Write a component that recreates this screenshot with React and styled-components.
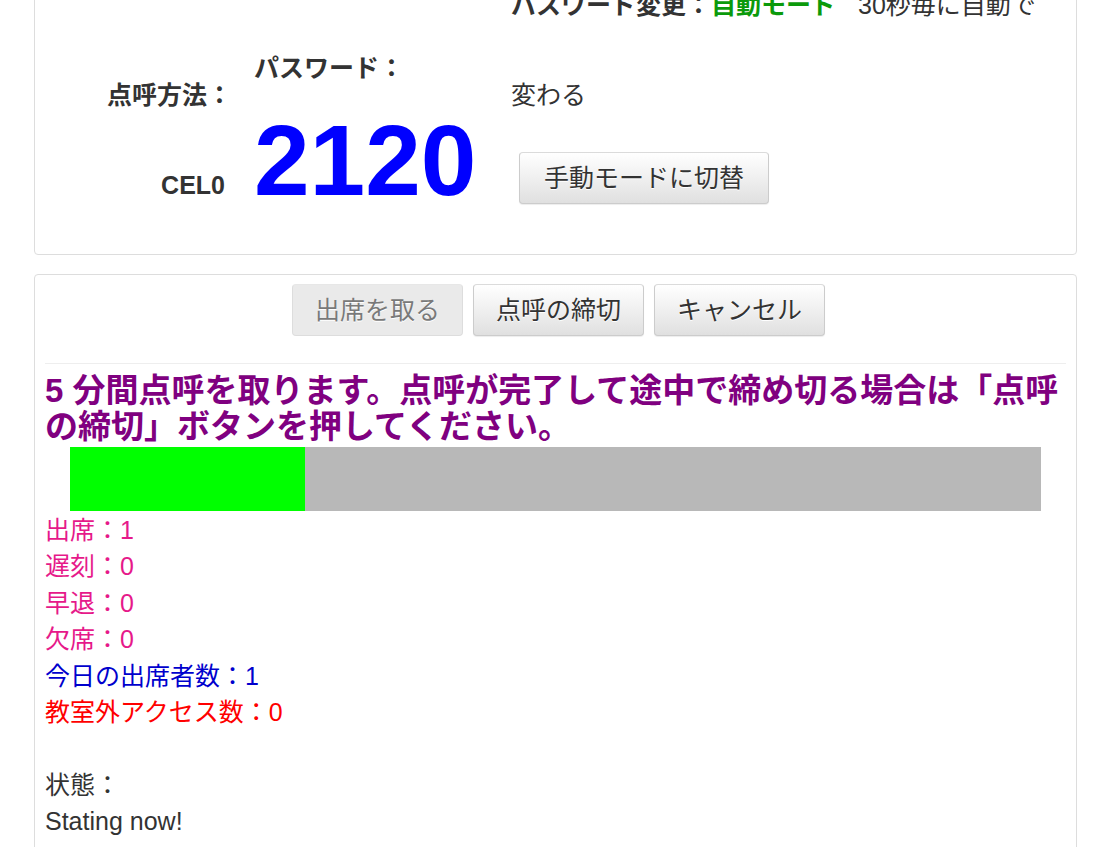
import React from 'react';
import styled, { createGlobalStyle } from 'styled-components';

const GlobalStyle = createGlobalStyle`
  body {
    margin: 0;
    background: #fff;
    color: #333;
    font-family: "Liberation Sans", "Noto Sans CJK JP", sans-serif;
    font-size: 25px;
    overflow: hidden;
  }
`;

const Page = styled.div`
  width: 1043px;
  padding-left: 34px;
`;

const Panel = styled.div`
  border: 1px solid #ddd;
  border-radius: 4px;
  background: #fff;
  margin-top: ${(p) => p.$offset || 0}px;
  margin-bottom: 19px;
`;

// top panel: method / password / password mode
const InfoRow = styled.div`
  display: flex;
  align-items: flex-start;
  padding: 19px 10px 44px;
`;

const MethodCol = styled.div`
  width: 180px;
  text-align: right;
  font-weight: bold;
  line-height: 36px;
`;

const Label = styled.div`
  margin-top: ${(p) => p.$top}px;
  margin-right: ${(p) => p.$pull || 0}px;
  font-weight: bold;
  line-height: 36px;
`;

const PassCol = styled.div`
  width: 257px;
  margin-left: 29px;
`;

const Password = styled.div`
  margin-top: 24px;
  font-size: 100px;
  line-height: 100px;
  font-weight: bold;
  color: #0000ff;
  font-family: "Liberation Sans", Arial, sans-serif;
`;

const ModeCol = styled.div`
  flex: 1;
`;

const ModeText = styled.div`
  line-height: 90px;
  b { font-weight: bold; }
`;

const Green = styled.b`
  color: #0b9a0b;
`;

const Note = styled.span`
  margin-left: 22px;
`;

const Button = styled.button`
  font-family: inherit;
  font-size: 25px;
  line-height: 36px;
  padding: 7px ${(p) => p.$pad || 22}px;
  margin: ${(p) => p.$margin || '0'};
  color: #333;
  border: 1px solid #ccc;
  border-top-color: #dbdbdb;
  border-radius: 4px;
  background-image: linear-gradient(to bottom, #fff 0, #e0e0e0 100%);
  text-shadow: 0 1px 0 #fff;
  box-shadow: inset 0 1px 0 rgba(255, 255, 255, 0.15), 0 1px 1px rgba(0, 0, 0, 0.075);
  cursor: pointer;

  &:disabled {
    background-image: none;
    background-color: #e0e0e0;
    opacity: 0.65;
    box-shadow: none;
    cursor: not-allowed;
  }
`;

// bottom panel
const RollBody = styled.div`
  padding: 9px 10px 10px;
`;

const Toolbar = styled.div`
  display: flex;
  justify-content: center;
  gap: 10px;
  padding-left: 6px;
`;

const Rule = styled.hr`
  margin: 27px 0 9px;
  border: 0;
  border-top: 1px solid #eee;
`;

const Notice = styled.div`
  color: #800080;
  font-weight: bold;
  font-size: 33px;
  line-height: 36px;
`;

const Progress = styled.div`
  margin: 2px 25px 1px;
  height: 64px;
  background: #b8b8b8;
`;

const ProgressFill = styled.div`
  height: 100%;
  background: #00ff00;
`;

const StatLine = styled.div`
  line-height: 36.4px;
  min-height: 36.4px;
  color: ${(p) => p.$color || '#333'};
`;

const stats = [
  { label: '出席：', value: 1, color: '#e6198a' },
  { label: '遅刻：', value: 0, color: '#e6198a' },
  { label: '早退：', value: 0, color: '#e6198a' },
  { label: '欠席：', value: 0, color: '#e6198a' },
  { label: '今日の出席者数：', value: 1, color: '#0000cd' },
  { label: '教室外アクセス数：', value: 0, color: '#ff0000' },
];

const elapsed = 0.242;

const App = () => {
  return (
    <Page>
      <GlobalStyle />
      <Panel $offset={-60}>
        <InfoRow>
          <MethodCol>
            <Label $top={117} $pull={-7}>点呼方法：</Label>
            <Label $top={54}>CEL0</Label>
          </MethodCol>
          <PassCol>
            <Label $top={90}>パスワード：</Label>
            <Password>2120</Password>
          </PassCol>
          <ModeCol>
            <ModeText>
              <b>パスワード変更：</b>
              <Green>自動モード</Green>
              <Note>30秒毎に自動で</Note>
              <br />
              変わる
            </ModeText>
            <Button $margin="12px 0 0 8px" $pad={24}>手動モードに切替</Button>
          </ModeCol>
        </InfoRow>
      </Panel>

      <Panel>
        <RollBody>
          <Toolbar>
            <Button disabled>出席を取る</Button>
            <Button>点呼の締切</Button>
            <Button>キャンセル</Button>
          </Toolbar>
          <Rule />
          <Notice>
            5 分間点呼を取ります。点呼が完了して途中で締め切る場合は「点呼
            <br />
            の締切」ボタンを押してください。
          </Notice>
          <Progress>
            <ProgressFill style={{ width: `${elapsed * 100}%` }} />
          </Progress>
          {stats.map((s) => (
            <StatLine key={s.label} $color={s.color}>
              {s.label}
              {s.value}
            </StatLine>
          ))}
          <StatLine />
          <StatLine>状態：</StatLine>
          <StatLine>Stating now!</StatLine>
        </RollBody>
      </Panel>
    </Page>
  );
};

export default App;
